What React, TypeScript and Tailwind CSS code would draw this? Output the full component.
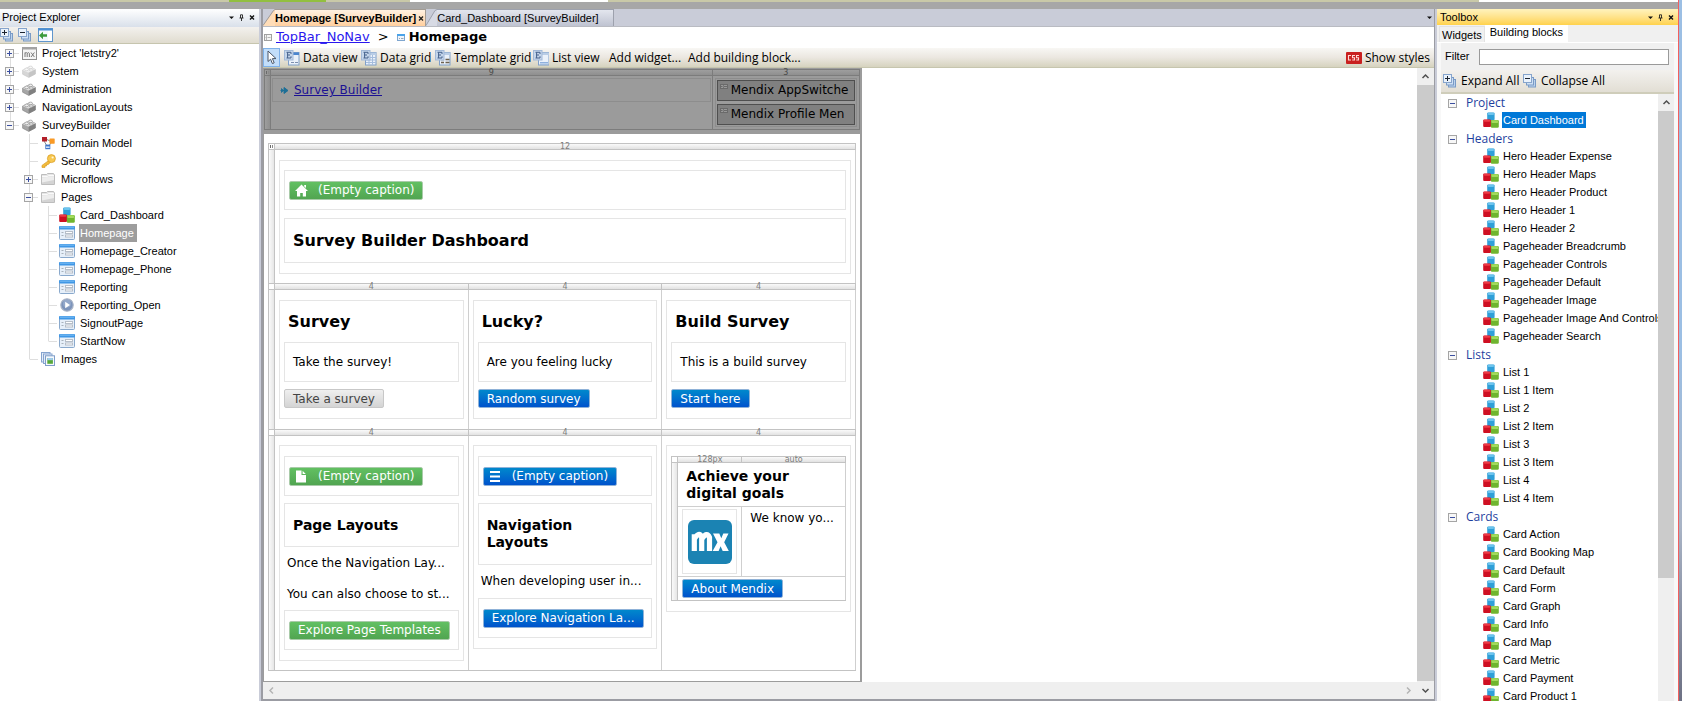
import React from "react";

const UI = "font-['Liberation_Sans',Arial,sans-serif]";
const SEGOE = "font-['Open_Sans','Noto_Sans',sans-serif]";
const DOC = "font-['DejaVu_Sans',Verdana,sans-serif]";

/* ---------- icons ---------- */

function BlocksIcon() {
  return (
    <svg width="16" height="16" viewBox="0 0 16 16" className="shrink-0" aria-hidden="true">
      <rect x="4.2" y="0.4" width="7.4" height="7.8" rx="1.2" fill="#2f9fd8" />
      <rect x="4.8" y="0.7" width="6.2" height="2.2" rx="1" fill="#6cc4ee" />
      <rect x="0.2" y="7.4" width="7.8" height="7.6" rx="1" fill="#cf0f22" />
      <rect x="0.8" y="7.8" width="6.4" height="2" rx="1" fill="#ef3b46" />
      <rect x="7.8" y="8" width="8" height="7.8" rx="1.2" fill="#6fb52f" />
      <rect x="8.4" y="8.3" width="6.8" height="2.6" rx="1" fill="#a3db5c" />
    </svg>
  );
}

function PageIcon() {
  return (
    <svg width="16" height="14" viewBox="0 0 16 14" className="shrink-0" aria-hidden="true">
      <rect x="0.5" y="0.5" width="15" height="13" rx="1" fill="#e6eff9" stroke="#8aa9cc" />
      <rect x="0" y="0" width="16" height="3.4" rx="1" fill="#3f97e6" />
      <rect x="1" y="0.6" width="14" height="1" fill="#7fc0f5" />
      <path d="M2.5 6.5h2M2.5 9.5h2" stroke="#a9b2bc" />
      <rect x="6.5" y="5.5" width="7" height="2" fill="#fff" stroke="#b6bec8" />
      <rect x="6.5" y="9" width="7" height="2" fill="#fff" stroke="#b6bec8" />
    </svg>
  );
}

function LegoIcon({ faded = false }: { faded?: boolean }) {
  return (
    <svg width="14" height="13" viewBox="0 0 14 13" opacity={faded ? 0.45 : 1} aria-hidden="true">
      <path d="M0.6 5 7.6 1.6 13.4 4.4V9L6.8 12.4 0.6 9.2Z" fill="#a6a6a6" stroke="#8a8a8a" strokeWidth="0.7" />
      <path d="M0.6 5 7.6 1.6 13.4 4.4 6.6 7.8Z" fill="#dadada" />
      <path d="M6.6 7.8 13.4 4.4V9L6.8 12.4Z" fill="#808080" />
      <ellipse cx="4.6" cy="4.4" rx="1.9" ry="1.3" fill="#f0f0f0" stroke="#8a8a8a" strokeWidth="0.6" />
      <ellipse cx="8.6" cy="2.4" rx="1.9" ry="1.3" fill="#f0f0f0" stroke="#8a8a8a" strokeWidth="0.6" />
      <ellipse cx="9.2" cy="5" rx="1.9" ry="1.2" fill="#e8e8e8" stroke="#8a8a8a" strokeWidth="0.6" />
    </svg>
  );
}

function MxIcon() {
  return (
    <svg width="15" height="13" viewBox="0 0 15 13" aria-hidden="true">
      <rect x="0.5" y="0.5" width="14" height="12" fill="#f4f4f4" stroke="#8f8f8f" />
      <rect x="0" y="0" width="15" height="2.5" fill="#a3a3a3" />
      <path d="M3 10V5.5M3 6.2Q4.8 4.8 5.2 6.4V10M5.2 6.4Q7 4.8 7.4 6.4V10M9 5.5 12.4 10M12.4 5.5 9 10" stroke="#7a7a7a" fill="none" />
    </svg>
  );
}

function DomainIcon() {
  return (
    <svg width="14" height="14" viewBox="0 0 14 14" aria-hidden="true">
      <path d="M5 3l6 3M3 5l3 5M10 7l-3 4" stroke="#8a8a8a" />
      <rect x="1" y="1" width="5" height="4.5" fill="#b3202a" />
      <rect x="8.5" y="2.5" width="5.2" height="5.2" rx="0.6" fill="#f99a26" />
      <rect x="4.3" y="8.6" width="5" height="4.6" fill="#3f76c9" />
      <rect x="5" y="10.4" width="3.6" height="1.6" fill="#cfe0f7" />
    </svg>
  );
}

function KeyIcon() {
  return (
    <svg width="15" height="14" viewBox="0 0 15 14" aria-hidden="true">
      <path d="M8.2 6.2 1 11.4V13.4H4V11.9H5.6V10.4H7.4L9.4 8.2Z" fill="#f5bd3c" stroke="#d69a1e" strokeWidth="0.7" />
      <circle cx="10.4" cy="4.6" r="4" fill="#f8c850" stroke="#d69a1e" strokeWidth="0.7" />
      <circle cx="11.6" cy="3.5" r="1.1" fill="#fff6d8" />
    </svg>
  );
}

function FolderIcon() {
  return (
    <svg width="14" height="12" viewBox="0 0 14 12" aria-hidden="true">
      <path d="M0.5 11.5V1.5H5.5L6.5 0.5H12.5L13.5 2V11.5Z" fill="#e6e6e6" stroke="#bdbdbd" />
      <path d="M1 4.5H13V11H1Z" fill="#d4d4d4" />
      <path d="M1 3.5H6.5L7.5 2.5H13" stroke="#fafafa" fill="none" />
      <path d="M1 4.6 13 3.4V7L1 9.5Z" fill="#ededed" />
    </svg>
  );
}

function PlayIcon() {
  return (
    <svg width="14" height="14" viewBox="0 0 14 14" aria-hidden="true">
      <circle cx="7" cy="7" r="6.2" fill="#7c94bb" stroke="#a9b4c6" strokeWidth="1.2" />
      <circle cx="7" cy="5.4" r="4" fill="#9db0d0" opacity="0.7" />
      <path d="M5.2 3.8 10 7 5.2 10.2Z" fill="#fff" />
    </svg>
  );
}

function ImagesIcon() {
  return (
    <svg width="14" height="14" viewBox="0 0 14 14" aria-hidden="true">
      <rect x="0.5" y="0.5" width="8.5" height="9.5" fill="#e5edf8" stroke="#86a4cf" />
      <rect x="2.5" y="2" width="8.5" height="9.5" fill="#e5edf8" stroke="#86a4cf" />
      <rect x="4.5" y="3.8" width="9" height="9.7" fill="#f6f9fd" stroke="#7f9dc9" />
      <rect x="6.3" y="6" width="5.6" height="5.8" fill="#57a83a" />
      <path d="M6.3 6h5.6v2.2H6.3z" fill="#9fcbe9" />
    </svg>
  );
}

function StackIcon({ sign }: { sign: "+" | "-" }) {
  return (
    <svg width="14" height="14" viewBox="0 0 14 14" className="shrink-0" aria-hidden="true">
      <rect x="5.5" y="5.5" width="7" height="7.5" fill="#bdd3ec" stroke="#7a9bc6" />
      <rect x="3.5" y="3.5" width="7" height="7.5" fill="#cfe0f3" stroke="#7a9bc6" />
      <rect x="0.5" y="0.5" width="8" height="8" fill="#eaf2fb" stroke="#86a4cc" />
      <path d={sign === "+" ? "M2 4.5h5M4.5 2v5" : "M2 4.5h5"} stroke="#1c2430" />
    </svg>
  );
}

function SyncIcon() {
  return (
    <svg width="15" height="14" viewBox="0 0 15 14" className="shrink-0" aria-hidden="true">
      <rect x="0.5" y="0.5" width="14" height="13" fill="#f2f7fd" stroke="#5f95cc" />
      <rect x="0.5" y="0.5" width="14" height="2" fill="#4b8fd4" />
      <rect x="10" y="3" width="4" height="10" fill="#fff" />
      <path d="M1 7.5 5 3.8V6.2H9V8.8H5V11.2Z" fill="#3a9a3c" />
    </svg>
  );
}

function WidgetIcon({ kind }: { kind: "view" | "grid" | "template" | "list" }) {
  const x = kind === "list" ? 5.5 : 4.5;
  return (
    <svg width="16" height="16" viewBox="0 0 16 16" className="shrink-0" aria-hidden="true">
      <rect x={x} y="2.5" width="10.5" height="12.5" fill="#eaf1fa" stroke="#7f9fc9" />
      <rect x={x} y="2.5" width="10.5" height="2.5" fill={kind === "view" ? "#4c86cf" : "#b9cde6"} />
      {kind === "grid" && <path d="M5 7.5h10M5 10h10M5 12.5h10M8 5v10M11.5 5v10" stroke="#a5bddd" />}
      {kind === "template" && <path d="M6 9.5h3M10.5 9.5h4M6 12.5h3M10.5 12.5h4" stroke="#6d6250" strokeWidth="1.3" />}
      {kind === "list" && <path d="M7 12.5h8M7 14h8" stroke="#8fb0dc" />}
      {kind === "view" && <path d="M7 12.5h3M11 12.5h3" stroke="#7c8fae" />}
      <rect x="0.5" y="0.5" width="8.5" height="9.5" fill="#c5d6eb" stroke="#a2b9d8" />
      <path d="M2.5 2.3H7V4M3.6 2.3V8M3.6 5H6M2.5 8H7V6.3" stroke="#44618c" fill="none" />
    </svg>
  );
}

function CursorIcon() {
  return (
    <svg width="10" height="15" viewBox="0 0 10 15" aria-hidden="true">
      <path d="M1 1V11.5L3.6 9.2 5.4 13.6 7.2 12.8 5.4 8.6H9Z" fill="#fff" stroke="#4a5566" />
    </svg>
  );
}

function Chevron({ dir, faint = false }: { dir: "up" | "down" | "left" | "right"; faint?: boolean }) {
  const d = {
    up: "M1.5 6 4.5 3 7.5 6",
    down: "M1.5 3 4.5 6 7.5 3",
    left: "M6 1.5 3 4.5 6 7.5",
    right: "M3 1.5 6 4.5 3 7.5",
  }[dir];
  return (
    <svg width="9" height="9" viewBox="0 0 9 9" aria-hidden="true">
      <path d={d} fill="none" stroke={faint ? "#b4b4b4" : "#505050"} strokeWidth="1.5" />
    </svg>
  );
}

function PanelButtons() {
  return (
    <div className="flex h-4 items-center gap-[5px]">
      <button aria-label="Window position" className="flex">
        <svg width="5" height="7" viewBox="0 0 5 7"><path d="M0 2.5h5L2.5 5Z" fill="#111" /></svg>
      </button>
      <button aria-label="Auto hide" className="flex">
        <svg width="5" height="7" viewBox="0 0 5 7"><path d="M1.5 4V0.8H3.5V4M0.5 4h4M2.5 4v3" stroke="#222" strokeWidth="0.9" fill="none" /></svg>
      </button>
      <button aria-label="Close" className="flex">
        <svg width="6" height="7" viewBox="0 0 6 7"><path d="M1 1.5 5 5.5M5 1.5 1 5.5" stroke="#111" strokeWidth="1.4" /></svg>
      </button>
    </div>
  );
}

/* ---------- project tree ---------- */

type Guide = "blank" | "line" | "tee" | "end" | "plus" | "plusFirst" | "minusEnd" | "minus";

function GuideCell({ kind }: { kind: Guide }) {
  if (kind === "blank") return <span className="w-[19px] shrink-0" />;
  const up = kind !== "plusFirst";
  const down = kind !== "end" && kind !== "minusEnd";
  const across = kind !== "line";
  const box = kind.startsWith("plus") || kind.startsWith("minus");
  return (
    <svg width="19" height="18" viewBox="0 0 19 18" className="shrink-0" aria-hidden="true">
      {up && <path d="M10.5 0V9" stroke="#dedede" />}
      {down && <path d="M10.5 9V18" stroke="#dedede" />}
      {across && <path d="M10.5 9.5H19" stroke="#dedede" />}
      {box && <rect x="5.5" y="5.5" width="8" height="8" fill="#f7f7f7" stroke="#a5a5a5" />}
      {box && <path d="M7 9.5h5" stroke="#3b4fa0" />}
      {box && kind.startsWith("plus") && <path d="M9.5 7v5" stroke="#3b4fa0" />}
    </svg>
  );
}

type Node = { label: string; guides: Guide[]; icon: React.ReactNode; selected?: boolean };

const pageRow = (label: string, selected = false, last = false): Node => ({
  label,
  guides: ["blank", "line", last ? "end" : "tee"],
  icon: <PageIcon />,
  selected,
});

const tree: Node[] = [
  { label: "Project 'letstry2'", guides: ["plusFirst"], icon: <MxIcon /> },
  { label: "System", guides: ["plus"], icon: <LegoIcon faded /> },
  { label: "Administration", guides: ["plus"], icon: <LegoIcon /> },
  { label: "NavigationLayouts", guides: ["plus"], icon: <LegoIcon /> },
  { label: "SurveyBuilder", guides: ["minusEnd"], icon: <LegoIcon /> },
  { label: "Domain Model", guides: ["blank", "tee"], icon: <DomainIcon /> },
  { label: "Security", guides: ["blank", "tee"], icon: <KeyIcon /> },
  { label: "Microflows", guides: ["blank", "plus"], icon: <FolderIcon /> },
  { label: "Pages", guides: ["blank", "minus"], icon: <FolderIcon /> },
  { label: "Card_Dashboard", guides: ["blank", "line", "tee"], icon: <BlocksIcon /> },
  pageRow("Homepage", true),
  pageRow("Homepage_Creator"),
  pageRow("Homepage_Phone"),
  pageRow("Reporting"),
  { label: "Reporting_Open", guides: ["blank", "line", "tee"], icon: <PlayIcon /> },
  pageRow("SignoutPage"),
  pageRow("StartNow", false, true),
  { label: "Images", guides: ["blank", "end"], icon: <ImagesIcon /> },
];

function ProjectExplorer() {
  return (
    <aside className="flex w-[259px] shrink-0 flex-col bg-white">
      <div className="flex h-[18px] items-start justify-between bg-linear-to-b from-white to-[#d9e0ea] pr-1 pl-0.5">
        <h2 className="text-[11px] leading-4">Project Explorer</h2>
        <PanelButtons />
      </div>
      <div className="flex h-[17px] items-center gap-1 border-b border-[#c6c5ae] bg-linear-to-b from-[#f3f1ee] to-[#e0dccf]">
        <button aria-label="Expand all" className="flex"><StackIcon sign="+" /></button>
        <button aria-label="Collapse all" className="flex"><StackIcon sign="-" /></button>
        <button aria-label="Select in explorer" className="ml-0.5 flex"><SyncIcon /></button>
      </div>
      <ul className="flex flex-col">
        {tree.map((n) => (
          <li key={n.label} className="flex h-[18px] items-center">
            {n.guides.map((g, i) => <GuideCell key={i} kind={g} />)}
            <span className="ml-0.5 flex w-4 shrink-0 justify-center">{n.icon}</span>
            <span className={`ml-1 pr-[3px] pl-px text-[11px] leading-[18px] ${n.selected ? "bg-[#9d9d9d] text-white" : ""}`}>
              {n.label}
            </span>
          </li>
        ))}
      </ul>
    </aside>
  );
}

/* ---------- page document ---------- */

function Bar({ labels, cols, dark = false }: { labels: string[]; cols: string; dark?: boolean }) {
  return (
    <div className={`grid h-[7px] border-y ${cols} ${dark ? "border-[#7c7c7c] bg-linear-to-b from-[#9e9e9e] to-[#8f8f8f]" : "border-[#c3c3c3] bg-linear-to-b from-[#fafafa] to-[#e2e2e2]"}`}>
      {labels.map((l, i) => (
        <span
          key={i}
          className={`h-[5px] border-r text-center text-[8px] leading-[5px] ${dark ? "border-[#7c7c7c] text-[#4a4a4a]" : "border-[#c3c3c3] text-[#7d7d7d]"}`}
        >
          {l}
        </span>
      ))}
    </div>
  );
}

function Strip({ handle = false, dark = false }: { handle?: boolean; dark?: boolean }) {
  return (
    <div className={`flex w-[7px] shrink-0 flex-col border-x ${dark ? "border-[#7c7c7c] bg-linear-to-r from-[#9e9e9e] to-[#8f8f8f]" : "border-[#c3c3c3] bg-linear-to-r from-[#fafafa] to-[#e6e6e6]"}`}>
      <div className={`flex h-[7px] justify-center gap-px border-y py-px ${dark ? "border-[#7c7c7c]" : "border-[#c3c3c3] bg-white"}`}>
        {handle && <span className="w-px bg-[#6a6a6a]" />}
        {handle && <span className="w-px bg-[#8a8a8a]" />}
      </div>
    </div>
  );
}

function Cell({ children }: { children: React.ReactNode }) {
  return <div className="min-w-0 border-r border-[#cfcfcf] px-1">{children}</div>;
}

function Box({ className = "", children }: { className?: string; children: React.ReactNode }) {
  return <div className={`border border-[#e5e5e5] ${className}`}>{children}</div>;
}

const tones = {
  green: "border-[#a9cba9] bg-linear-to-b from-[#62c062] to-[#51a551] text-white",
  blue: "border-[#8fb2d8] bg-linear-to-b from-[#0088cc] to-[#0052cc] text-white",
  grey: "border-[#c8c8c8] bg-linear-to-b from-[#efefef] to-[#d4d4d4] text-[#444]",
};

function Btn({ tone, icon, children }: { tone: keyof typeof tones; icon?: React.ReactNode; children: React.ReactNode }) {
  return (
    <button className={`flex h-[19px] max-w-full items-center rounded-xs border text-[12px] leading-4 whitespace-nowrap ${icon ? "gap-2.5 pr-2 pl-[5px]" : "px-2"} ${tones[tone]}`}>
      {icon}
      <span>{children}</span>
    </button>
  );
}

const homeGlyph = (
  <svg width="13" height="13" viewBox="0 0 13 13" aria-hidden="true">
    <path d="M6.5 0.5 13 7H11V12.5H7.8V9H5.2V12.5H2V7H0L6.5 0.5ZM9.2 1H11V4L9.2 2.4Z" fill="#fff" />
  </svg>
);
const fileGlyph = (
  <svg width="13" height="13" viewBox="0 0 13 13" aria-hidden="true">
    <path d="M1 0.5H6.5V5H11V12.5H1ZM7.6 0.8 10.8 4H7.6Z" fill="#fff" />
  </svg>
);
const menuGlyph = (
  <svg width="13" height="13" viewBox="0 0 13 13" aria-hidden="true">
    <path d="M1 2h10M1 6.5h10M1 11h10" stroke="#fff" strokeWidth="2" />
  </svg>
);

function Survey({ title, text, button }: { title: string; text: string; button: React.ReactNode }) {
  return (
    <Cell>
      <Box className="my-2.5 px-1 pb-2.5">
        <h3 className="flex h-[41px] items-center pl-1 text-[16px] font-bold">{title}</h3>
        <Box className="mb-[7px] flex h-10 items-center pl-2 text-[12px] leading-4 whitespace-nowrap">{text}</Box>
        {button}
      </Box>
    </Cell>
  );
}

function TopSection() {
  return (
    <div className="bg-[#9b9b9b] pt-px pb-1">
      <div className="flex border-b border-[#7c7c7c]">
        <Strip handle dark />
        <div className="min-w-0 flex-1">
          <Bar dark labels={["9", "3"]} cols="grid-cols-[3fr_1fr]" />
          <div className="grid h-[53px] grid-cols-[3fr_1fr]">
            <div className="border-r border-[#7c7c7c] px-px pt-0.5">
              <div className="flex h-6 items-center gap-[5px] border border-[#8d8d8d] pl-[7px]">
                <svg width="9" height="9" viewBox="0 0 9 9" aria-hidden="true">
                  <path d="M0.500 4.500H4M1 2.500 3.500 4.500 1 6.500M4 1.500 8 4.500 4 7.500Z" fill="#1d6f96" stroke="#1d6f96" />
                </svg>
                <a href="#survey-builder" className="text-[12px] leading-4 text-[#1b1193] underline">Survey Builder</a>
              </div>
            </div>
            <div className="border-r border-[#7c7c7c] px-0.5 pt-0.5">
              <div className="flex flex-col gap-[3px] border border-[#8d8d8d] p-px">
                {["Mendix AppSwitche", "Mendix Profile Men"].map((t) => (
                  <div key={t} className="flex h-[21px] gap-[3px] border border-[#4f4f4f] bg-[#808080] pl-0.5 whitespace-nowrap">
                    <svg width="8" height="5" viewBox="0 0 8 5" className="mt-[3px] shrink-0" aria-hidden="true">
                      <rect width="8" height="5" fill="#6a6a6a" />
                      <path d="M1 1.5h2v2H1M4 1.5h3M4 3.5h3" stroke="#a5a5a5" strokeWidth="0.8" fill="none" />
                    </svg>
                    <span className="text-[12px] leading-[19px]">{t}</span>
                  </div>
                ))}
              </div>
            </div>
          </div>
        </div>
      </div>
    </div>
  );
}

function CanvasPage() {
  return (
    <div className={`w-[599px] shrink-0 self-start border-r-2 border-b border-l border-[#9c9c9c] ${DOC}`}>
      <TopSection />
      <div className="bg-white px-1 pt-[9px] pb-2.5">
        <div className="border-b border-[#c3c3c3]">
          <div className="flex">
            <Strip handle />
            <div className="min-w-0 flex-1">
              <Bar labels={["12"]} cols="grid-cols-1" />
              <Cell>
                <div className="pt-2.5 pb-[9px]">
                  <Box className="px-1 pt-[9px] pb-2.5">
                    <Box className="mb-2 flex h-10 items-center px-1">
                      <Btn tone="green" icon={homeGlyph}>(Empty caption)</Btn>
                    </Box>
                    <Box className="flex h-[45px] items-center pl-2">
                      <h2 className="text-[16px] leading-5 font-bold">Survey Builder Dashboard</h2>
                    </Box>
                  </Box>
                </div>
              </Cell>
            </div>
          </div>

          <div className="flex">
            <Strip />
            <div className="min-w-0 flex-1">
              <Bar labels={["4", "4", "4"]} cols="grid-cols-3" />
              <div className="grid grid-cols-3">
                <Survey title="Survey" text="Take the survey!" button={<Btn tone="grey">Take a survey</Btn>} />
                <Survey title="Lucky?" text="Are you feeling lucky" button={<Btn tone="blue">Random survey</Btn>} />
                <Survey title="Build Survey" text="This is a build survey" button={<Btn tone="blue">Start here</Btn>} />
              </div>
            </div>
          </div>

          <div className="flex">
            <Strip />
            <div className="min-w-0 flex-1">
              <Bar labels={["4", "4", "4"]} cols="grid-cols-3" />
              <div className="grid grid-cols-3">
                <Cell>
                  <Box className="my-[9px] px-1 py-2.5">
                    <Box className="mb-[7px] flex h-10 items-center px-1">
                      <Btn tone="green" icon={fileGlyph}>(Empty caption)</Btn>
                    </Box>
                    <Box className="flex h-11 items-center pl-2">
                      <h3 className="text-[14px] leading-[17px] font-bold">Page Layouts</h3>
                    </Box>
                    <div className="flex h-[63px] flex-col justify-around pl-[3px] text-[12px] leading-4 whitespace-nowrap">
                      <p>Once the Navigation Lay...</p>
                      <p>You can also choose to st...</p>
                    </div>
                    <Box className="flex h-10 items-center px-1">
                      <Btn tone="green">Explore Page Templates</Btn>
                    </Box>
                  </Box>
                </Cell>
                <Cell>
                  <Box className="my-[9px] px-1 py-2.5">
                    <Box className="mb-[7px] flex h-10 items-center px-1">
                      <Btn tone="blue" icon={menuGlyph}>(Empty caption)</Btn>
                    </Box>
                    <Box className="flex h-[62px] items-center pl-2">
                      <h3 className="text-[14px] leading-[17px] font-bold">Navigation<br />Layouts</h3>
                    </Box>
                    <p className="pl-[3px] text-[12px] leading-[33px] whitespace-nowrap">When developing user in...</p>
                    <Box className="flex h-10 items-center px-1">
                      <Btn tone="blue">Explore Navigation La...</Btn>
                    </Box>
                  </Box>
                </Cell>
                <Cell>
                  <Box className="my-[9px] px-1 py-2.5">
                    <div className="flex border-b border-[#c3c3c3]">
                      <Strip />
                      <div className="min-w-0 flex-1">
                        <Bar labels={["128px", "auto"]} cols="grid-cols-[64px_1fr]" />
                        <div className="border-r border-[#cfcfcf]">
                          <h3 className="flex h-11 items-center border-b border-[#cfcfcf] pl-2 text-[14px] leading-[17px] font-bold">Achieve your<br />digital goals</h3>
                          <div className="grid h-[70px] grid-cols-[64px_1fr] border-b border-[#cfcfcf]">
                            <div className="border-r border-[#cfcfcf] px-1 py-0.5">
                              <Box className="flex h-full items-center justify-center">
                                <svg width="44" height="44" viewBox="0 0 44 44" role="img" aria-label="Mendix">
                                  <rect width="44" height="44" rx="6" fill="#1b83b3" />
                                  <path d="M6.300 31V14.200M6.300 19Q11 11 13.700 17V31M13.700 19Q19 11 21.500 17.500V31" fill="none" stroke="#fff" strokeWidth="5.200" />
                                  <path d="M25 13.500H31.300L33.300 18.200 35.300 13.500H40.500L36.200 22.300 40.800 31H34.700L32.600 26.200 30.600 31H24.700L29.500 22.300Z" fill="#fff" />
                                </svg>
                              </Box>
                            </div>
                            <p className="pt-[3px] pl-2 text-[12px] leading-4 whitespace-nowrap">We know yo...</p>
                          </div>
                          <div className="py-0.5 pl-1">
                            <Btn tone="blue">About Mendix</Btn>
                          </div>
                        </div>
                      </div>
                    </div>
                  </Box>
                </Cell>
              </div>
            </div>
          </div>
        </div>
      </div>
    </div>
  );
}

/* ---------- editor ---------- */

const widgetButtons = [
  { label: "Data view", kind: "view", width: "w-[77px]" },
  { label: "Data grid", kind: "grid", width: "w-[74px]" },
  { label: "Template grid", kind: "template", width: "w-[98px]" },
  { label: "List view", kind: "list", width: "w-[70px]" },
] as const;

function Editor() {
  return (
    <main className="mr-0.5 flex min-w-0 flex-1 flex-col border-r border-b-2 border-l-2 border-[#9b9ca3] bg-white">
      <div className="flex h-[18px] items-end justify-between border-b border-[#b9bbc2] bg-[#c9ccd8]">
        <div className="flex h-[17px]">
          <div className="flex">
            <svg width="12" height="17" viewBox="0 0 12 17" aria-hidden="true">
              <path d="M0 17 11 1.500Q11.500 0.500 12 0.500V17Z" fill="#ffddb8" />
              <path d="M0 16.500 10.500 1.500 12 0.500" stroke="#a39c94" fill="none" />
            </svg>
            <div className="flex items-center gap-0.5 border-t border-r border-[#a39c94] bg-linear-to-b from-[#fff1e2] to-[#ffcf9e] pr-px">
              <a href="#homepage" className="text-[11px] leading-4 font-bold whitespace-nowrap">Homepage [SurveyBuilder]</a>
              <button aria-label="Close tab" className="flex">
                <svg width="6" height="7" viewBox="0 0 6 7"><path d="M1 1.500 5 5.500M5 1.500 1 5.500" stroke="#222" strokeWidth="1.300" /></svg>
              </button>
            </div>
          </div>
          <div className="flex">
            <svg width="11" height="17" viewBox="0 0 11 17" aria-hidden="true">
              <path d="M0 17 9 1.500Q10 0.500 11 0.500V17Z" fill="#d7dae4" />
              <path d="M0 16.500 9 1.500 11 0.500" stroke="#9da1ad" fill="none" />
            </svg>
            <a href="#card-dashboard" className="border-t border-r border-[#9da1ad] bg-linear-to-b from-[#e3e6ee] to-[#bfc3d1] pr-3.5 text-[11px] leading-4 whitespace-nowrap">
              Card_Dashboard [SurveyBuilder]
            </a>
          </div>
        </div>
        <button aria-label="Open documents" className="flex h-[17px] items-center pr-0.5">
          <svg width="5" height="5" viewBox="0 0 5 5"><path d="M0 1.500h5L2.500 4Z" fill="#111" /></svg>
        </button>
      </div>

      <nav aria-label="Breadcrumb" className={`flex h-[21px] items-center pb-px text-[13px] leading-5 ${DOC}`}>
        <svg width="8" height="7" viewBox="0 0 8 7" className="ml-px" aria-hidden="true">
          <rect x="0.500" y="0.500" width="7" height="6" fill="#f4f4f4" stroke="#a0a0a0" />
          <path d="M1.500 3.500h1M3.500 3.500h3M2.500 1v5" stroke="#b4b4b4" />
        </svg>
        <a href="#topbar" className="ml-1 text-[#2a17ee] underline">TopBar_NoNav</a>
        <span className="ml-2">&gt;</span>
        <svg width="8" height="7" viewBox="0 0 8 7" className="ml-2" aria-hidden="true">
          <rect x="0.500" y="0.500" width="7" height="6" fill="#eef4fb" stroke="#7fa6cf" />
          <rect width="8" height="2" fill="#4aa3ea" />
          <path d="M2 4.500h1M4 4.500h2.500" stroke="#9aa7b5" />
        </svg>
        <h1 className="ml-1 font-bold">Homepage</h1>
      </nav>

      <div className={`flex h-5 items-center justify-between border-b border-[#c6c5ae] bg-linear-to-b from-[#f8f7f4] via-[#ebe7e0] to-[#d6d3bf] text-[12px] leading-5 whitespace-nowrap ${SEGOE}`}>
        <div className="flex items-center">
          <button aria-label="Select" className="mr-1 flex h-[19px] w-[17px] items-center justify-center border border-[#7fb1e8] bg-[#c3defa]">
            <CursorIcon />
          </button>
          {widgetButtons.map((b) => (
            <button key={b.label} className={`flex items-center gap-[3px] ${b.width}`}>
              <WidgetIcon kind={b.kind} />
              <span>{b.label}</span>
            </button>
          ))}
          <button className="ml-1.5 w-[79px] text-left">Add widget...</button>
          <button>Add building block...</button>
        </div>
        <button className="flex items-center gap-[3px] pr-1">
          <svg width="16" height="12" viewBox="0 0 16 12" aria-hidden="true">
            <rect width="16" height="12" rx="1" fill="#c9201f" />
            <path d="M5 3.500H2.500V8H5M9 3.500H6.500V5.700H8.500V8H6.200M13 3.500H10.500V5.700H12.500V8H10.200" fill="none" stroke="#ffd9d6" strokeWidth="1.100" />
          </svg>
          Show styles
        </button>
      </div>

      <div className="flex min-h-0 flex-1">
        <div className="flex min-w-0 flex-1 flex-col">
          <div className="flex min-h-0 flex-1 overflow-hidden">
            <CanvasPage />
          </div>
          <div className="flex h-[17px] shrink-0 items-center justify-between bg-[#efefef] px-1">
            <Chevron dir="left" faint />
            <Chevron dir="right" faint />
          </div>
        </div>
        <div className="flex w-[17px] shrink-0 flex-col bg-[#efefef]">
          <div className="flex h-[17px] items-center justify-center"><Chevron dir="up" /></div>
          <div className="flex-1 bg-[#cbcbcb]" />
          <div className="flex h-[18px] items-center justify-center"><Chevron dir="down" /></div>
        </div>
      </div>
    </main>
  );
}

/* ---------- toolbox ---------- */

const groups = [
  { name: "Project", items: ["Card Dashboard"] },
  {
    name: "Headers",
    items: [
      "Hero Header Expense", "Hero Header Maps", "Hero Header Product", "Hero Header 1", "Hero Header 2",
      "Pageheader Breadcrumb", "Pageheader Controls", "Pageheader Default", "Pageheader Image",
      "Pageheader Image And Controls", "Pageheader Search",
    ],
  },
  { name: "Lists", items: ["List 1", "List 1 Item", "List 2", "List 2 Item", "List 3", "List 3 Item", "List 4", "List 4 Item"] },
  {
    name: "Cards",
    items: [
      "Card Action", "Card Booking Map", "Card Default", "Card Form", "Card Graph", "Card Info",
      "Card Map", "Card Metric", "Card Payment", "Card Product 1",
    ],
  },
];

function Toolbox() {
  return (
    <aside className="flex w-[241px] shrink-0 flex-col bg-[#f0f0f0]">
      <div className="flex h-4 shrink-0 items-center justify-between bg-linear-to-b from-[#fff3bd] to-[#ffd24a] pr-1 pl-[3px]">
        <h2 className="text-[11px] leading-4">Toolbox</h2>
        <PanelButtons />
      </div>
      <div className="flex h-[18px] shrink-0 items-end border-b border-white pl-0.5 text-[11px]">
        <button className="h-4 border border-b-0 border-[#e2e2e2] px-0.5 leading-4">Widgets</button>
        <button className="flex h-[17px] items-start bg-white px-[5px] leading-[15px]">Building blocks</button>
      </div>
      <div className="flex min-h-0 flex-1 flex-col border-r-4 border-l-4 border-[#f8f8f8]">
        <div className="flex h-[27px] shrink-0 items-center pr-[5px] pl-1">
          <label htmlFor="filter" className="w-[34px] text-[11px]">Filter</label>
          <input id="filter" type="text" className="h-4 min-w-0 flex-1 border border-[#9a9a9a] bg-white px-1 text-[11px] outline-none" />
        </div>
        <div className={`flex h-6 shrink-0 items-center border-b-2 border-[#cfcdba] bg-linear-to-b from-[#f3f1ee] to-[#e2ded4] pl-0.5 text-[12px] ${SEGOE}`}>
          <button className="flex w-20 items-center gap-1 whitespace-nowrap"><StackIcon sign="+" />Expand All</button>
          <button className="flex items-center gap-1 whitespace-nowrap"><StackIcon sign="-" />Collapse All</button>
        </div>
        <div className="flex min-h-0 flex-1 bg-white">
          <ul className="min-w-0 flex-1 overflow-hidden">
            {groups.map((g) => (
              <li key={g.name}>
                <div className="flex h-[18px] items-center gap-[9px] pl-[7px]">
                  <svg width="9" height="9" viewBox="0 0 9 9" className="shrink-0" aria-hidden="true">
                    <rect x="0.500" y="0.500" width="8" height="8" fill="#f7f7f7" stroke="#a5a5a5" />
                    <path d="M2 4.500h5" stroke="#3b4fa0" />
                  </svg>
                  <span className={`text-[12px] leading-4 text-[#1e3f9e] ${SEGOE}`}>{g.name}</span>
                </div>
                <ul>
                  {g.items.map((it) => (
                    <li key={it} className="flex h-[18px] items-start pl-[42px]">
                      <BlocksIcon />
                      <span className={`ml-[3px] pr-0.5 pl-px text-[11px] leading-4 whitespace-nowrap ${it === "Card Dashboard" ? "bg-[#0078d7] text-white" : ""}`}>
                        {it}
                      </span>
                    </li>
                  ))}
                </ul>
              </li>
            ))}
          </ul>
          <div className="flex w-4 shrink-0 flex-col bg-[#efefef]">
            <div className="flex h-[17px] items-center justify-center"><Chevron dir="up" /></div>
            <div className="h-[77%] bg-[#cbcbcb]" />
          </div>
        </div>
      </div>
    </aside>
  );
}

export default function App() {
  return (
    <div className={`flex h-screen overflow-hidden bg-[#c9ccd8] text-black ${UI}`}>
      <div className="flex min-w-0 flex-1 flex-col">
        <div className="flex h-0.5 shrink-0 bg-[#c9c9a8]">
          <span className="ml-[229px] w-[97px] bg-[#92bf40]" />
          <span className="ml-[84px] w-[198px] bg-white" />
          <span className="ml-auto w-[199px] bg-white" />
        </div>
        <div className="h-[7px] shrink-0 bg-[#a7a7a7]" />
        <div className="flex min-h-0 flex-1">
          <ProjectExplorer />
          <div className="w-0.5 shrink-0 bg-[#c9ccd8]" />
          <Editor />
          <Toolbox />
        </div>
      </div>
      <div className="w-1 shrink-0 border-l border-[#f2605f] bg-linear-to-b from-[#9cbfe4] from-50% via-[#a9b4c6] via-75% to-[#6d7184]" />
    </div>
  );
}
